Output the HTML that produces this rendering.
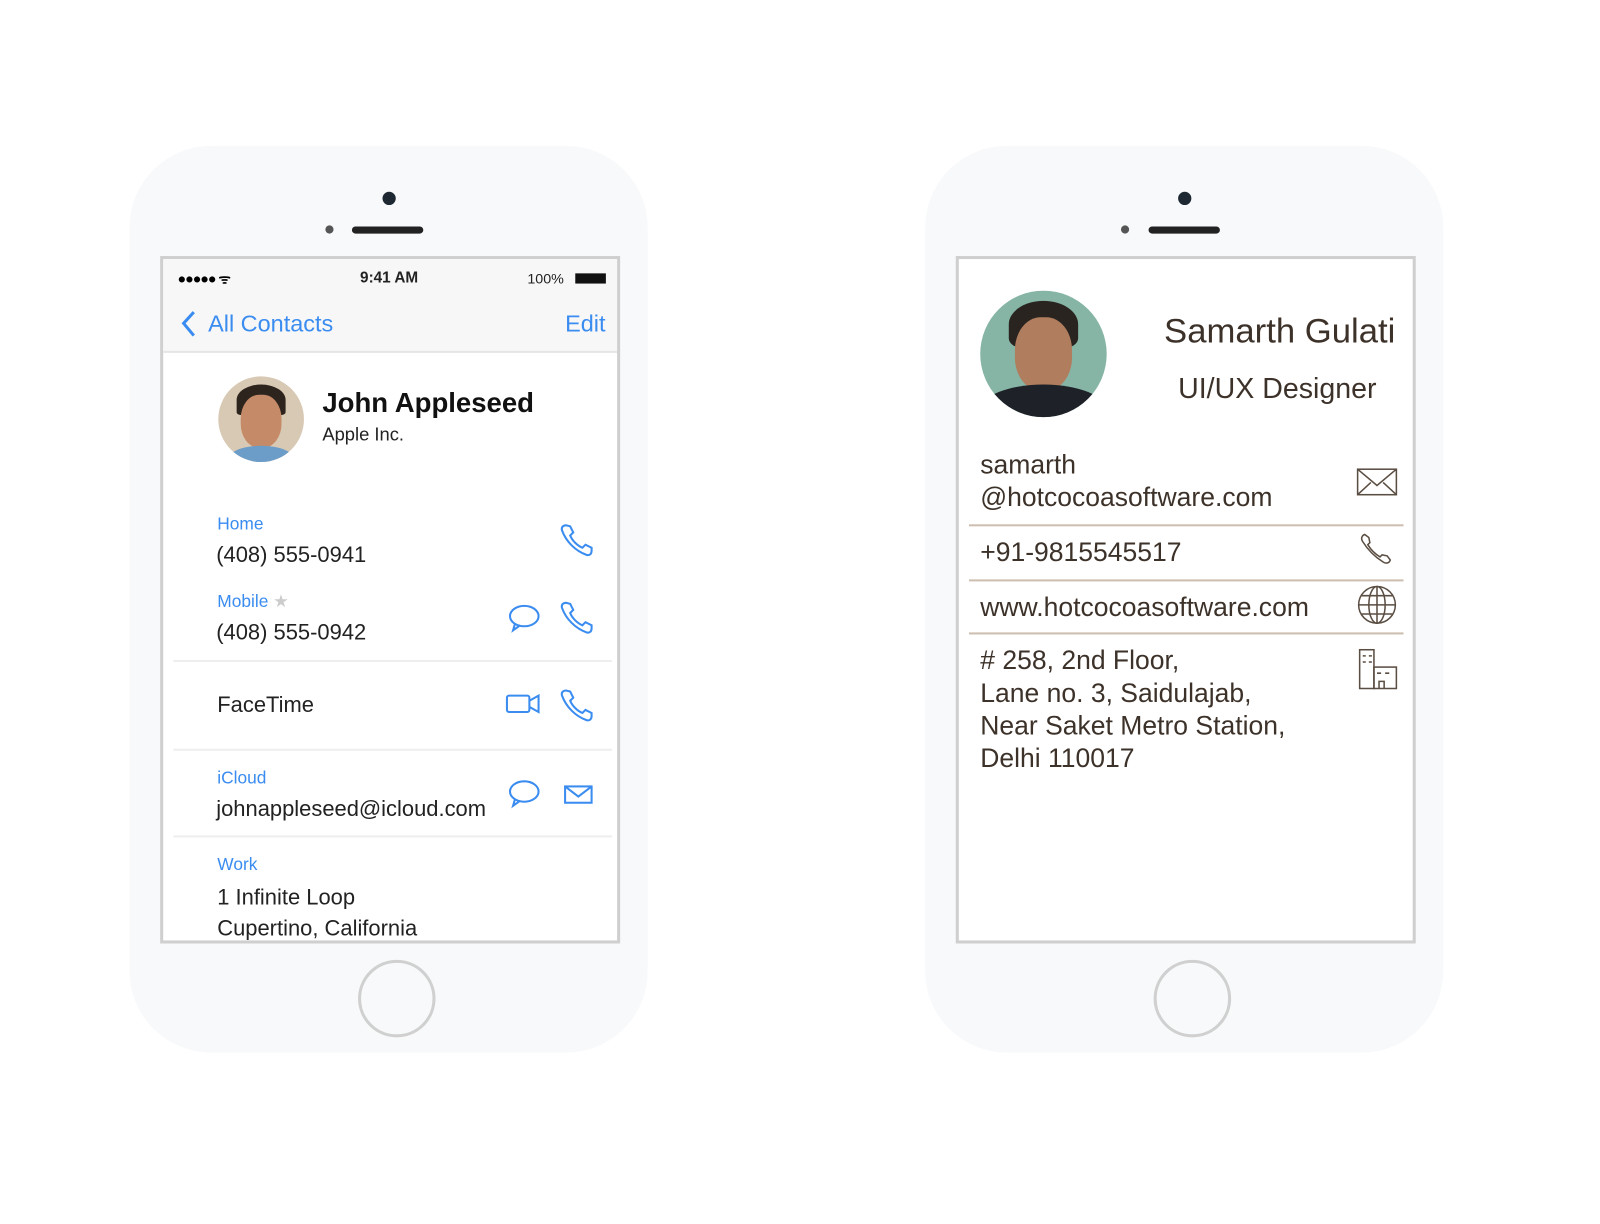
<!DOCTYPE html>
<html><head><meta charset="utf-8"><style>
*{margin:0;padding:0;box-sizing:border-box}
body{width:1600px;height:1200px;background:#fff;position:relative;overflow:hidden;font-family:"Liberation Sans",sans-serif}
#w{position:absolute;left:0;top:0;width:1600px;height:1200px;transform:scale(1.02);transform-origin:0 0}
.a{position:absolute;white-space:nowrap}
.body{position:absolute;top:143px;width:508px;height:889px;background:#f8f9fa;border-radius:80px}
.scr{position:absolute;top:251px;width:451px;height:674px;background:#fff;border:3px solid #cfcfcf;overflow:hidden}
.cam{position:absolute;width:13px;height:13px;border-radius:50%;background:#1d2833;top:188px}
.dot{position:absolute;width:8px;height:8px;border-radius:50%;background:#555;top:221px}
.spk{position:absolute;width:70px;height:7px;border-radius:4px;background:#222;top:222px}
.hb{position:absolute;width:76px;height:76px;border-radius:50%;border:3px solid #d0d0d0;top:941px}
.blue{color:#3a8cf0}
.lab{font-size:17px;color:#3a8cf0}
.val{font-size:21.5px;color:#222}
.sep{position:absolute;height:2px;background:#eee;left:10px;width:430px}
.b{color:#3d322a}
.bl{position:absolute;height:2px;background:#cdbfb0;left:10px;width:426px}
</style></head><body><div id="w">
<!-- left phone -->
<div class="body" style="left:127px"></div>
<div class="cam" style="left:375px"></div><div class="dot" style="left:319px"></div><div class="spk" style="left:345px"></div>
<div class="hb" style="left:351px"></div>
<div class="scr" style="left:157px">
 <div class="a" style="left:0;top:0;width:445px;height:92px;background:#f7f7f7;border-bottom:2px solid #e6e6e6"></div>
 <div class="a" style="left:14px;top:10px;font-size:14px;font-weight:bold;letter-spacing:-1px">●●●●● <span style="font-size:13px">ᯤ</span></div>
 <div class="a" style="left:193px;top:10px;font-size:15px;font-weight:bold;color:#222">9:41 AM</div>
 <div class="a" style="left:357px;top:11px;font-size:14px;color:#222">100%</div>
 <div class="a" style="left:404px;top:14px;width:30px;height:10px;background:#111"></div>
 <svg class="a" style="left:16px;top:50px" width="18" height="28"><path d="M14 2 L4 13 L14 25" fill="none" stroke="#3a8cf0" stroke-width="3"/></svg>
 <div class="a blue" style="left:44px;top:50px;font-size:23px">All Contacts</div>
 <div class="a blue" style="left:394px;top:50px;font-size:23px">Edit</div>
 <div class="a" style="left:54px;top:115px;width:84px;height:84px;border-radius:50%;overflow:hidden;background:#d8c9b4">
  <div class="a" style="left:18px;top:8px;width:48px;height:30px;border-radius:50% 50% 10% 10%;background:#2e241e"></div>
  <div class="a" style="left:22px;top:18px;width:40px;height:52px;border-radius:45%;background:#c58a68"></div>
  <div class="a" style="left:8px;top:68px;width:68px;height:30px;border-radius:50%;background:#6c9cc8"></div>
 </div>
 <div class="a" style="left:156px;top:126px;font-size:27px;font-weight:bold;color:#111">John Appleseed</div>
 <div class="a" style="left:156px;top:162px;font-size:18px;color:#222">Apple Inc.</div>
 <div class="a lab" style="left:53px;top:250px">Home</div>
 <div class="a val" style="left:52px;top:278px">(408) 555-0941</div>
 <div class="a lab" style="left:53px;top:326px">Mobile <span style="color:#ccc">★</span></div>
 <div class="a val" style="left:52px;top:354px">(408) 555-0942</div>
 <div class="sep" style="top:393px"></div>
 <div class="a val" style="left:53px;top:425px">FaceTime</div>
 <div class="sep" style="top:480px"></div>
 <div class="a lab" style="left:53px;top:499px">iCloud</div>
 <div class="a val" style="left:52px;top:527px">johnappleseed@icloud.com</div>
 <div class="sep" style="top:565px"></div>
 <div class="a lab" style="left:53px;top:584px">Work</div>
 <div class="a val" style="left:53px;top:614px">1 Infinite Loop</div>
 <div class="a val" style="left:53px;top:644px">Cupertino, California</div>
 <svg class="a" style="left:0;top:0" width="445" height="668" fill="none" stroke="#3a8cf0" stroke-width="2">
  <path d="M395 261 C392 261 390 263 391 266 C395 277 404 286 415 290 C418 291 420 289 420 286 L420 283 L414 280 L411 283 C406 281 401 276 399 271 L402 268 L399 262 Z"/>
  <path d="M395 337 C392 337 390 339 391 342 C395 353 404 362 415 366 C418 367 420 365 420 362 L420 359 L414 356 L411 359 C406 357 401 352 399 347 L402 344 L399 338 Z"/>
  <path d="M395 423 C392 423 390 425 391 428 C395 439 404 448 415 452 C418 453 420 451 420 448 L420 445 L414 442 L411 445 C406 443 401 438 399 433 L402 430 L399 424 Z"/>
  <ellipse cx="354" cy="350" rx="14" ry="10"/><path d="M345 357 L343 364 L350 359"/>
  <ellipse cx="354" cy="522" rx="14" ry="10"/><path d="M345 529 L343 536 L350 531"/>
  <rect x="337" y="428" width="22" height="16" rx="2"/><path d="M359 433 L368 428 L368 444 L359 439"/>
  <rect x="394" y="517" width="26" height="16"/><path d="M394 517 L407 527 L420 517"/>
 </svg>
</div>
<!-- right phone -->
<div class="body" style="left:907px"></div>
<div class="cam" style="left:1155px"></div><div class="dot" style="left:1099px"></div><div class="spk" style="left:1126px"></div>
<div class="hb" style="left:1131px"></div>
<div class="scr" style="left:937px">
 <div class="a" style="left:21px;top:31px;width:124px;height:124px;border-radius:50%;overflow:hidden;background:#86b5a6">
  <div class="a" style="left:28px;top:10px;width:68px;height:46px;border-radius:50% 50% 20% 20%;background:#2a2420"></div>
  <div class="a" style="left:34px;top:26px;width:56px;height:72px;border-radius:45%;background:#b07e5e"></div>
  <div class="a" style="left:0;top:92px;width:124px;height:50px;border-radius:50%;background:#1e2228"></div>
 </div>
 <div class="a b" style="right:17px;top:52px;font-size:34px">Samarth Gulati</div>
 <div class="a b" style="left:215px;top:111px;font-size:28px">UI/UX Designer</div>
 <div class="a b" style="left:21px;top:185px;font-size:26px;line-height:32px">samarth<br>@hotcocoasoftware.com</div>
 <div class="bl" style="top:260px"></div>
 <div class="a b" style="left:21px;top:272px;font-size:26px">+91-9815545517</div>
 <div class="bl" style="top:314px"></div>
 <div class="a b" style="left:21px;top:326px;font-size:26px">www.hotcocoasoftware.com</div>
 <div class="bl" style="top:366px"></div>
 <div class="a b" style="left:21px;top:377px;font-size:26px;line-height:32px">#&nbsp;258, 2nd Floor,<br>Lane no. 3, Saidulajab,<br>Near Saket Metro Station,<br>Delhi 110017</div>
 <svg class="a" style="left:0;top:0" width="445" height="668" fill="none" stroke="#5a4d42" stroke-width="1.5">
  <rect x="391" y="206" width="38" height="25"/><path d="M391 206 L410 222 L429 206 M391 231 L404 219 M429 231 L416 219"/>
  <path d="M398 270 C395 271 394 274 396 277 C401 285 408 292 416 297 C419 299 422 298 423 295 L420 291 L415 290 L413 292 C408 289 404 285 401 280 L403 278 L402 273 Z"/>
  <circle cx="410" cy="339" r="18"/><ellipse cx="410" cy="339" rx="8" ry="18"/><path d="M392 339 H428 M395 330 H425 M395 348 H425 M410 321 V357"/>
  <rect x="393" y="383" width="14" height="38"/><rect x="407" y="400" width="22" height="21"/><path d="M396 389 h3 M402 389 h3 M396 395 h3 M402 395 h3 M410 406 h4 M418 406 h4 M412 421 v-7 h5 v7"/>
 </svg>
</div>
</div></body></html>
